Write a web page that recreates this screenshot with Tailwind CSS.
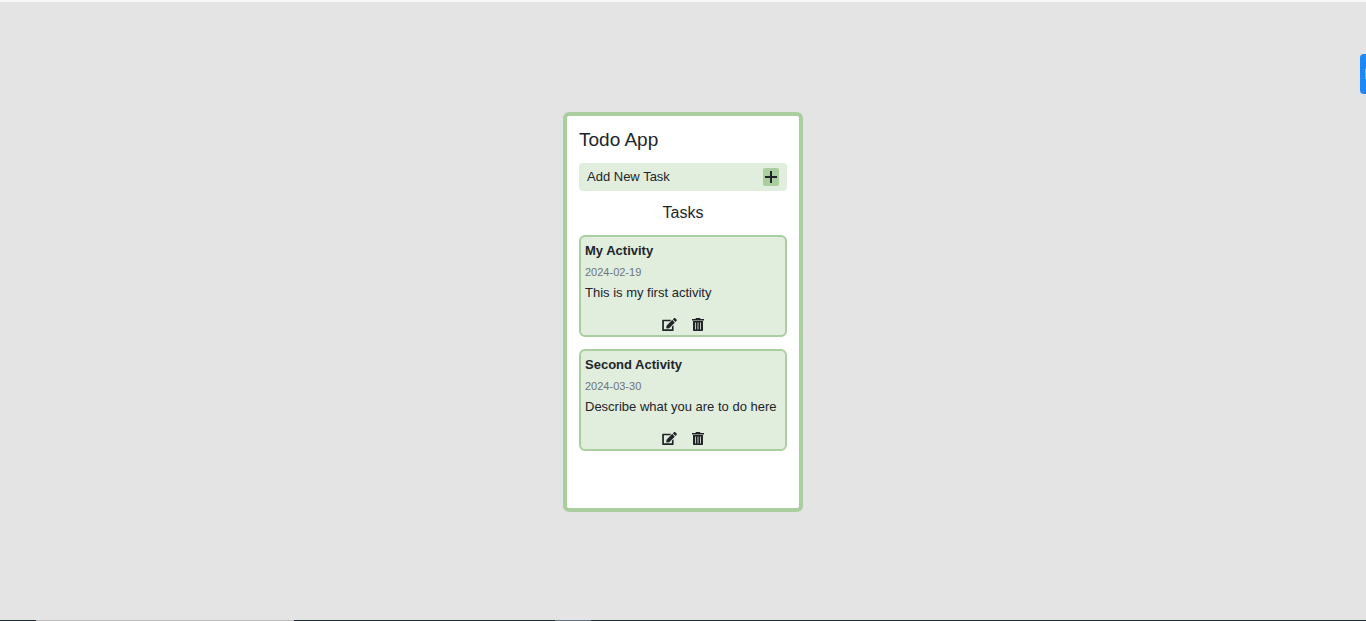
<!DOCTYPE html>
<html lang="en">
<head>
<meta charset="utf-8">
<meta name="viewport" content="width=device-width, initial-scale=1">
<title>Todo App</title>
<script src="https://cdn.jsdelivr.net/npm/@tailwindcss/browser@4"></script>
</head>
<body class="relative flex min-h-screen flex-col overflow-hidden bg-[#e4e4e4] font-['Liberation_Sans',Arial,sans-serif] text-[13px] leading-5 text-[#212529]">
<svg class="hidden" aria-hidden="true">
  <symbol id="plus" viewBox="0 0 12 12"><path d="M5 0h2v5h5v2H7v5H5V7H0V5h5z"/></symbol>
  <symbol id="edit" viewBox="0 0 576 512"><path d="M402.600 83.200l90.200 90.200c3.800 3.800 3.800 10 0 13.800L274.400 405.600l-92.800 10.300c-12.400 1.400-22.900-9.100-21.500-21.500l10.300-92.800L388.800 83.200c3.800-3.800 10-3.800 13.800 0zm162-22.900l-48.800-48.800c-15.200-15.200-39.900-15.200-55.200 0l-35.400 35.400c-3.800 3.800-3.800 10 0 13.800l90.200 90.200c3.800 3.800 10 3.800 13.800 0l35.400-35.400c15.200-15.300 15.200-40 0-55.200zM384 346.200V444H68V128h225.800c3.200 0 6.200-1.300 8.500-3.500l40-40c7.600-7.600 2.200-20.500-8.500-20.500H20C8 64 0 72 0 84v408c0 12 8 20 20 20h408c12 0 20-8 20-20V306.200c0-10.700-12.900-16-20.500-8.500l-40 40c-2.200 2.300-3.500 5.300-3.500 8.500z"/></symbol>
  <symbol id="trash" viewBox="0 0 12 13"><path fill-rule="evenodd" d="M4 0h4l.6 1H12v1.500H0V1h3.400zM1 3h10v9.300q0 .7-.7.700H1.700q-.7 0-.7-.7zM3 4.500v7h.8v-7zM5.600 4.500v7h.8v-7zM8.200 4.500v7H9v-7z"/></symbol>
</svg>
<div class="h-0.5 bg-[#f8f8f8]"></div>
<main class="flex grow items-center justify-center pt-0.5">
  <div class="min-h-100 w-60 rounded-md border-4 border-[#abcea1] bg-white p-3">
    <h1 class="mb-[11px] text-[19px] leading-6">Todo App</h1>
    <div class="flex items-center justify-between rounded bg-[#e1eddd] px-2 py-1">
      <span id="add-label">Add New Task</span>
      <button type="button" aria-labelledby="add-label" class="flex h-[18px] w-4 items-center justify-center rounded-xs bg-[#abcea1]"><svg class="h-3 w-3 fill-current"><use href="#plus"/></svg></button>
    </div>
    <h2 class="my-2.5 text-center text-base leading-6">Tasks</h2>
    <div class="flex flex-col gap-3">
      <article class="rounded-md border-2 border-[#abcea1] bg-[#e1eddd] px-1 pt-1 pb-1">
        <h3 class="font-bold">My Activity</h3>
        <p class="mt-px text-[11px] text-[#6c757d]">2024-02-19</p>
        <p class="mt-px">This is my first activity</p>
        <div class="mt-[15px] flex justify-center gap-[15px]">
          <button type="button" aria-label="Edit My Activity"><svg class="h-[13px] w-[15px] fill-current"><use href="#edit"/></svg></button>
          <button type="button" aria-label="Delete My Activity"><svg class="h-[13px] w-3 fill-current"><use href="#trash"/></svg></button>
        </div>
      </article>
      <article class="rounded-md border-2 border-[#abcea1] bg-[#e1eddd] px-1 pt-1 pb-1">
        <h3 class="font-bold">Second Activity</h3>
        <p class="mt-px text-[11px] text-[#6c757d]">2024-03-30</p>
        <p class="mt-px">Describe what you are to do here</p>
        <div class="mt-[15px] flex justify-center gap-[15px]">
          <button type="button" aria-label="Edit Second Activity"><svg class="h-[13px] w-[15px] fill-current"><use href="#edit"/></svg></button>
          <button type="button" aria-label="Delete Second Activity"><svg class="h-[13px] w-3 fill-current"><use href="#trash"/></svg></button>
        </div>
      </article>
    </div>
  </div>
</main>
<button type="button" aria-label="Open panel" class="absolute top-[54px] right-0 flex h-10 w-1.5 items-center justify-end rounded-l bg-[#1e88f8]"><span class="h-2.5 w-px bg-[#7dbafa]"></span></button>
<div class="flex h-px bg-[#1f2c3a]"><div class="ml-9 w-[258px] bg-[#bcbcbc]"></div><div class="ml-[261px] w-9 bg-[#62717c]"></div></div>
</body>
</html>
